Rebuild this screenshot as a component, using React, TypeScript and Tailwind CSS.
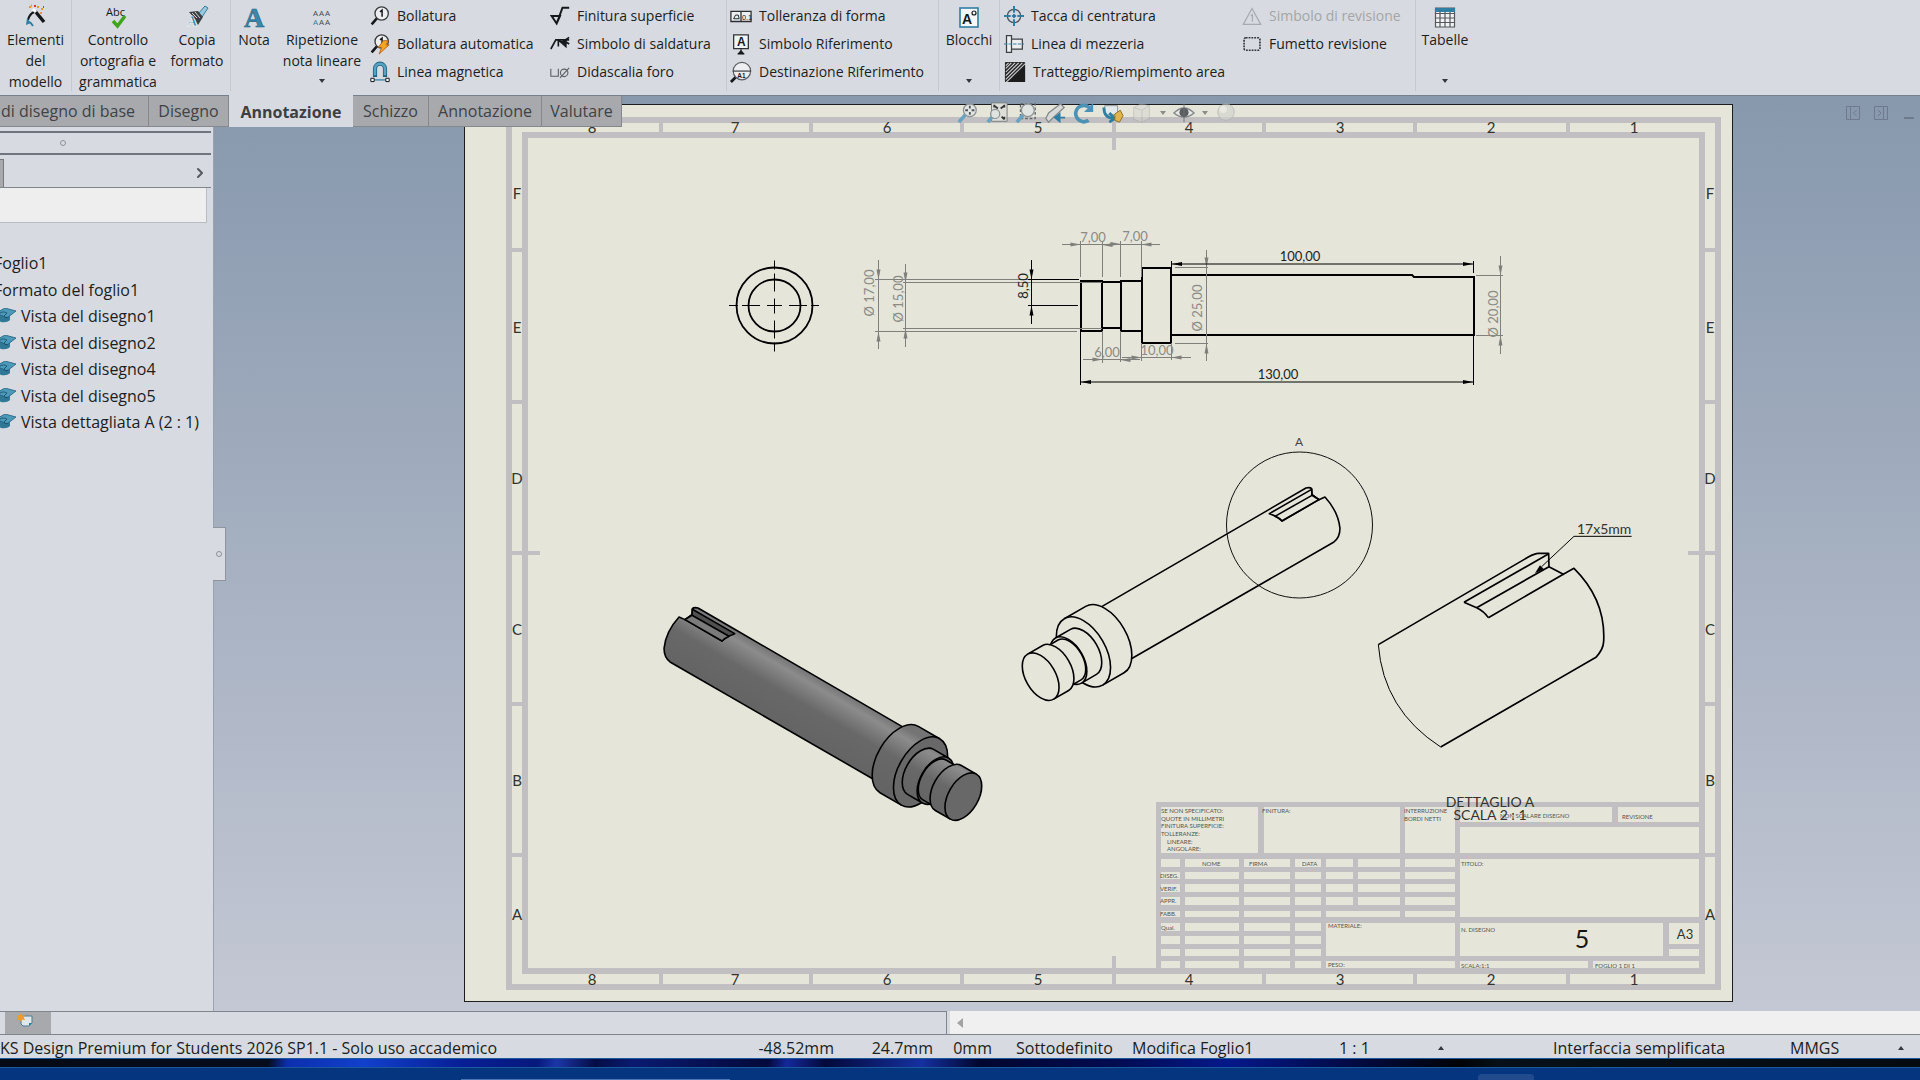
import type { ReactNode } from 'react';
import { ChevronRight } from 'lucide-react';

const INK = '#15181b';
const BLUE = '#2f7ea3';

/* ---------- ribbon icons ---------- */

function Icon({ children, className = 'size-6' }: { children: ReactNode; className?: string }) {
  return (
    <svg viewBox="0 0 24 24" fill="none" className={`${className} shrink-0 overflow-visible`} aria-hidden="true">
      {children}
    </svg>
  );
}

const ModelItemsIcon = () => (
  <Icon>
    <path d="M4 16a12 12 0 0 1 6-8" stroke={INK} strokeWidth="2" />
    <path d="M3 14l-1 7 5-2z" fill={BLUE} />
    <path d="M6 18l3 4" stroke={BLUE} strokeWidth="2" />
    <path d="M11 7l9 11" stroke={INK} strokeWidth="3.400" />
    <path d="M9 5l3 3" stroke="#fff" strokeWidth="3" />
    <path d="M5 3h2M13 3h2M17 5h2M16 9h2M7 1.500h1" stroke="#e8942f" strokeWidth="2" />
    <path d="M10 2h2M19 3h1" stroke="#cc3d2e" strokeWidth="2" />
  </Icon>
);

const SpellIcon = () => (
  <Icon className="h-6 w-7">
    <text x="0" y="12" fontSize="11" fill={INK} fontFamily="Open Sans">Abc</text>
    <path d="M7 17l4.500 5L19 12" stroke="#3fa51c" strokeWidth="3.400" />
  </Icon>
);

const FormatPainterIcon = () => (
  <Icon>
    <path d="M13 10l7-8 3 2-6 9z" fill="#9cc8de" stroke={BLUE} strokeWidth="1" />
    <path d="M4 8l9-1 5 6-5 8-3-6z" fill="#3c4043" />
    <path d="M7 9l5 5M10 8l5 6" stroke="#cfd3d6" strokeWidth="1" />
    <text x="2" y="22" fontSize="14" fontWeight="700" fill={BLUE} stroke="#fff" strokeWidth="0.5" fontFamily="Liberation Serif">A</text>
  </Icon>
);

const NoteIcon = () => (
  <Icon>
    <text x="2" y="23" fontSize="28" fontWeight="700" fill="#3c88ab" stroke="#23627f" strokeWidth="0.6" fontFamily="Liberation Serif">A</text>
  </Icon>
);

const PatternIcon = () => (
  <Icon>
    <g fontSize="8" fontFamily="Open Sans" fill="#44484c">
      <text x="3" y="12">A</text>
      <text x="9" y="12">A</text>
      <text x="15" y="12">A</text>
      <text x="3" y="21" fill={BLUE}>A</text>
      <text x="9" y="21">A</text>
      <text x="15" y="21">A</text>
    </g>
  </Icon>
);

const BalloonIcon = () => (
  <Icon className="size-5">
    <path d="M2 22l7-8" stroke={INK} strokeWidth="3" />
    <circle cx="14" cy="9" r="8" fill="#eceef0" stroke="#3a3d40" strokeWidth="1.600" />
    <path d="M12 7l2.500-2V13" stroke={INK} strokeWidth="1.800" />
  </Icon>
);

const AutoBalloonIcon = () => (
  <Icon className="size-5">
    <path d="M2 22l7-8" stroke={INK} strokeWidth="3" />
    <circle cx="14" cy="9" r="8" fill="#eceef0" stroke="#3a3d40" strokeWidth="1.600" />
    <path d="M12 7l2.500-2V13" stroke={INK} strokeWidth="1.800" />
    <path d="M16 8l6 0-3 5h4L11 24l3-8h-4z" fill="#f5a623" stroke="#b65a12" strokeWidth="1" />
  </Icon>
);

const MagnetIcon = () => (
  <Icon className="size-5">
    <path d="M6 18V8a6 6 0 0 1 12 0v10" stroke="#23627f" strokeWidth="5" />
    <path d="M6 16V8a6 6 0 0 1 12 0v8" stroke="#55a4c6" strokeWidth="3" />
    <path d="M4 21.500h16" stroke={BLUE} strokeWidth="1.500" />
    <path d="M1 19.500h4v4H1zM19 19.500h4v4h-4z" fill="#fff" stroke={INK} strokeWidth="1.200" />
  </Icon>
);

const SurfaceFinishIcon = () => (
  <Icon className="size-5">
    <path d="M2 12h10l-4 9zM8 21L15 2h8" stroke={INK} strokeWidth="2.400" />
  </Icon>
);

const WeldIcon = () => (
  <Icon className="size-5">
    <path d="M1 18l6-11h16M23 4l-6 4 6 4M10 8v7M11 8l8 7V8" stroke={INK} strokeWidth="2" />
    <path d="M12 8h7v6z" fill={INK} />
  </Icon>
);

const HoleCalloutIcon = () => (
  <Icon className="size-5">
    <path d="M1 8v9h9V8" stroke="#5a5e62" strokeWidth="1.300" />
    <circle cx="17" cy="13" r="4.500" stroke="#5a5e62" strokeWidth="1.300" />
    <path d="M12 19L23 7" stroke="#5a5e62" strokeWidth="1.300" />
  </Icon>
);

const GeoToleranceIcon = () => (
  <Icon className="size-[22px]">
    <path d="M1 7h22v11H1zM12 7v11" stroke="#2c2f32" strokeWidth="1.400" fill="#eceef0" />
    <path d="M4 15l2-4h3l1 4z" stroke={INK} strokeWidth="1" />
    <text x="13" y="16" fontSize="8" fill={INK} fontFamily="Liberation Sans">0.1</text>
  </Icon>
);

const DatumIcon = () => (
  <Icon className="size-[22px]">
    <path d="M4 2h16v15H4z" fill="#f3f4f5" stroke="#303336" strokeWidth="1.400" />
    <text x="7.500" y="14" fontSize="13" fontWeight="700" fill={INK} fontFamily="Liberation Sans">A</text>
    <path d="M12 17v3M8.500 23l3.500-4 3.500 4z" fill={INK} stroke={INK} />
  </Icon>
);

const DatumTargetIcon = () => (
  <Icon className="size-[22px]">
    <path d="M1 23l6-6" stroke={INK} strokeWidth="3" />
    <circle cx="13" cy="11" r="9.500" fill="#eceef0" stroke="#5a5e62" strokeWidth="1.300" />
    <path d="M3 11h20" stroke="#3a3d40" strokeWidth="1.300" />
    <text x="8" y="18" fontSize="7" fontWeight="700" fill={INK} fontFamily="Liberation Sans">A1</text>
  </Icon>
);

const BlocksIcon = () => (
  <Icon>
    <rect x="3" y="4" width="18" height="19" fill="#f5f6f7" stroke={BLUE} strokeWidth="1.600" />
    <text x="5" y="20" fontSize="14" fontWeight="700" fill={INK} fontFamily="Liberation Sans">A</text>
    <circle cx="17" cy="9" r="2" stroke={INK} strokeWidth="1.200" />
  </Icon>
);

const CenterMarkIcon = () => (
  <Icon className="size-5">
    <circle cx="12" cy="12" r="8" stroke="#4b4f54" strokeWidth="1.500" />
    <path d="M12 0v8M12 16v8M0 12h8M16 12h8M9.500 12h5M12 9.500v5" stroke={BLUE} strokeWidth="2.400" />
  </Icon>
);

const CenterlineIcon = () => (
  <Icon className="size-5">
    <path d="M3 2h6v20H3zM9 6h13v12H9" stroke="#3c4044" strokeWidth="1.500" fill="#eceef0" />
    <path d="M0 12h24" stroke={BLUE} strokeWidth="1.200" strokeDasharray="4 1.500" />
  </Icon>
);

const HatchIcon = () => (
  <Icon className="size-[22px]">
    <rect x="1" y="1" width="22" height="22" rx="1" fill="#2a2a2b" />
    <path d="M2 20L20 2M2 16L16 2M2 12L12 2M2 8l6-6M2 23.500L23 3M2 5l3-3" stroke="#d8dadc" strokeWidth="1.100" />
    <path d="M23 5v18H5z" fill="#1c1c1d" />
  </Icon>
);

const RevisionSymbolIcon = () => (
  <Icon className="size-5">
    <path d="M12 3l10.500 19h-21z" stroke="#a8abaf" strokeWidth="1.500" />
    <path d="M10.500 12l2-1.500V19" stroke="#a8abaf" strokeWidth="1.500" />
  </Icon>
);

const RevisionCloudIcon = () => (
  <Icon className="size-5">
    <rect x="2.500" y="4.500" width="19" height="15" rx="2" stroke="#33373b" strokeWidth="2" strokeDasharray="2.200 1.200" />
  </Icon>
);

const TablesIcon = () => (
  <Icon>
    <path d="M2.500 4h19v19h-19zM2.500 9.500h19M2.500 14h19M2.500 18.500h19M7 7v16M12 7v16M17 7v16" stroke="#54585c" strokeWidth="1.200" fill="#f1f2f3" />
    <path d="M2 4h20v4H2z" fill="#2f7ea3" />
  </Icon>
);

/* ---------- ribbon ---------- */

function Caret({ up = false }: { up?: boolean }) {
  return (
    <svg viewBox="0 0 6 4" className="h-1 w-1.5" aria-hidden="true">
      <path d={up ? 'M0 4h6L3 0z' : 'M0 0h6L3 4z'} fill="#33373b" />
    </svg>
  );
}

function LargeCommand({ icon, lines, caret, className }: { icon: ReactNode; lines: string[]; caret?: boolean; className: string }) {
  return (
    <button type="button" className={`flex shrink-0 flex-col items-center pt-1 ${className}`}>
      {icon}
      <span className="mt-px whitespace-nowrap text-center leading-[21px]">
        {lines.map((line) => (
          <span key={line} className="block">{line}</span>
        ))}
      </span>
      {caret && <span className="mt-auto pb-3"><Caret /></span>}
    </button>
  );
}

function SmallCommands({ items, className }: { items: { icon: ReactNode; label: string; disabled?: boolean }[]; className: string }) {
  return (
    <div className={`flex shrink-0 flex-col pt-0.5 ${className}`}>
      {items.map((item) => (
        <button
          key={item.label}
          type="button"
          disabled={item.disabled}
          className="flex h-7 items-center gap-[7px] whitespace-nowrap disabled:text-[#a3a6aa]"
        >
          {item.icon}
          {item.label}
        </button>
      ))}
    </div>
  );
}

const Separator = () => <div className="mb-1 w-px shrink-0 bg-[#c5c9ce]" />;

function Ribbon() {
  return (
    <header className="flex h-24 overflow-hidden border-b border-[#76808f] bg-[#d7dae0] text-sm text-[#1b1e22]">
      <LargeCommand icon={<ModelItemsIcon />} lines={['Elementi', 'del', 'modello']} className="w-[71px]" />
      <Separator />
      <LargeCommand icon={<SpellIcon />} lines={['Controllo', 'ortografia e', 'grammatica']} className="w-[92px]" />
      <LargeCommand icon={<FormatPainterIcon />} lines={['Copia', 'formato']} className="w-[66px]" />
      <Separator />
      <LargeCommand icon={<NoteIcon />} lines={['Nota']} className="w-[46px]" />
      <LargeCommand icon={<PatternIcon />} lines={['Ripetizione', 'nota lineare']} caret className="w-[90px]" />
      <SmallCommands
        className="w-[180px] pl-[3px]"
        items={[
          { icon: <BalloonIcon />, label: 'Bollatura' },
          { icon: <AutoBalloonIcon />, label: 'Bollatura automatica' },
          { icon: <MagnetIcon />, label: 'Linea magnetica' },
        ]}
      />
      <SmallCommands
        className="w-[179px] pl-[3px]"
        items={[
          { icon: <SurfaceFinishIcon />, label: 'Finitura superficie' },
          { icon: <WeldIcon />, label: 'Simbolo di saldatura' },
          { icon: <HoleCalloutIcon />, label: 'Didascalia foro' },
        ]}
      />
      <Separator />
      <SmallCommands
        className="w-[211px] pl-[3px]"
        items={[
          { icon: <GeoToleranceIcon />, label: 'Tolleranza di forma' },
          { icon: <DatumIcon />, label: 'Simbolo Riferimento' },
          { icon: <DatumTargetIcon />, label: 'Destinazione Riferimento' },
        ]}
      />
      <Separator />
      <LargeCommand icon={<BlocksIcon />} lines={['Blocchi']} caret className="w-[60px]" />
      <Separator />
      <SmallCommands
        className="w-[239px] pl-1"
        items={[
          { icon: <CenterMarkIcon />, label: 'Tacca di centratura' },
          { icon: <CenterlineIcon />, label: 'Linea di mezzeria' },
          { icon: <HatchIcon />, label: 'Tratteggio/Riempimento area' },
        ]}
      />
      <SmallCommands
        className="w-[176px] pl-[3px]"
        items={[
          { icon: <RevisionSymbolIcon />, label: 'Simbolo di revisione', disabled: true },
          { icon: <RevisionCloudIcon />, label: 'Fumetto revisione' },
        ]}
      />
      <Separator />
      <LargeCommand icon={<TablesIcon />} lines={['Tabelle']} caret className="w-[58px]" />
    </header>
  );
}

const TABS = [
  { id: 'base', label: 'di disegno di base', width: 'w-[149px] justify-end pr-[13px]' },
  { id: 'disegno', label: 'Disegno', width: 'w-20 justify-center' },
  { id: 'annotazione', label: 'Annotazione', width: 'w-[124px] justify-center', active: true },
  { id: 'schizzo', label: 'Schizzo', width: 'w-[76px] justify-center' },
  { id: 'annotazione-2', label: 'Annotazione', width: 'w-[113px] justify-center' },
  { id: 'valutare', label: 'Valutare', width: 'w-20 justify-center' },
];

function CommandTabs() {
  return (
    <nav className="absolute left-0 top-0 z-20 flex h-[31px] text-base" role="tablist">
      {TABS.map((tab) => (
        <button
          key={tab.id}
          type="button"
          role="tab"
          aria-selected={!!tab.active}
          className={`flex items-center overflow-hidden whitespace-nowrap ${tab.width} ${
            tab.active
              ? '-mt-px bg-[#d7dae0] pt-px font-bold text-[#3c3f43]'
              : 'border-b border-r border-[#85888c] bg-[#a7a9ac] text-[#3f4246]'
          }`}
        >
          {tab.label}
        </button>
      ))}
    </nav>
  );
}

/* ---------- feature tree ---------- */

function HatIcon() {
  return (
    <svg viewBox="0 0 20 16" className="h-4 w-5 shrink-0" aria-hidden="true">
      <path d="M2 7v5c3 3 9 3 12 0V6z" fill="#2f7896" />
      <path d="M0 5L9 0l11 3-9 7z" fill="#4b9aba" stroke="#23607c" strokeWidth="0.8" />
      <path d="M3 6c3-3 6-2 8-1l-3 3c1 2 3 2 4 1" stroke="#1d4f66" strokeWidth="0.900" fill="none" />
    </svg>
  );
}

const SHEETS = ['Foglio1', 'Formato del foglio1'];
const VIEWS = ['Vista del disegno1', 'Vista del disegno2', 'Vista del disegno4', 'Vista del disegno5', 'Vista dettagliata A (2 : 1)'];

function FeaturePanel() {
  return (
    <aside className="relative z-10 flex w-[214px] shrink-0 flex-col border-r border-[#9aa3b0] bg-[#d7dae0] pt-[35px] text-base text-[#1b1e22]">
      <div className="mr-0.5 flex h-6 items-center justify-center border-y-2 border-[#6f757d] pr-[86px]">
        <span className="size-1.5 rounded-full border border-[#8f9398]" />
      </div>
      <div className="mr-0.5 flex h-[33px] items-center justify-end border-b border-[#7f858c] pr-[3px]">
        <span className="mr-auto mt-1 h-7 w-1 border-r border-t border-[#777b80] bg-[#a7a9ac]" />
        <button type="button" aria-label="Espandi" className="pt-1">
          <ChevronRight className="size-4 text-[#55595e]" strokeWidth={3} />
        </button>
      </div>
      <input aria-label="Filtro" className="mr-1.5 h-[35px] border-b border-r border-[#b9bcc0] bg-[#eeeeee] px-2" />
      <ul className="mt-[27px] flex h-[185px] flex-col justify-between overflow-hidden">
        {SHEETS.map((name) => (
          <li key={name} className="-ml-1.5 h-[26px] leading-[26px]">
            <button type="button" className="whitespace-nowrap">{name}</button>
          </li>
        ))}
        {VIEWS.map((name) => (
          <li key={name} className="-ml-1 h-[26px]">
            <button type="button" className="flex h-full items-center gap-[5px] whitespace-nowrap">
              <HatIcon />
              {name}
            </button>
          </li>
        ))}
      </ul>
      <button
        type="button"
        aria-label="Comprimi pannello"
        className="absolute -right-[13px] top-[431px] flex h-[54px] w-[13px] items-center justify-center border-y border-r border-[#8f959d] bg-[#d7dae0]"
      >
        <span className="size-1.5 rounded-full border border-[#8f9398]" />
      </button>
    </aside>
  );
}

/* ---------- sheet drawing ---------- */

const PAPER = '#e5e5da';
const FRAME = '#c1bfc1';
const DIM = '#7f7f7b';
const FONT = 'Lato, "Open Sans", sans-serif';

// Top and bottom zones share the same columns, left and right the same rows
const COLS: [string, number][] = [['8', 592], ['7', 735], ['6', 887], ['5', 1038], ['4', 1189], ['3', 1340], ['2', 1491], ['1', 1634]];
const COL_TICKS = [661, 811, 962, 1264, 1415, 1568];
const ROWS: [string, number][] = [['F', 193], ['E', 327], ['D', 478], ['C', 629], ['B', 780], ['A', 914]];
const ROW_TICKS = [250, 402, 704, 855];

function SheetFrame() {
  return (
    <g>
      <g fill="none" stroke={FRAME} strokeWidth="6">
        <rect x="509" y="120" width="1209" height="867" />
        <rect x="525" y="135" width="1177" height="836" />
      </g>
      <g stroke={FRAME} strokeWidth="4">
        {COL_TICKS.map((x) => (
          <path key={x} d={`M${x} 122V133M${x} 973V985`} />
        ))}
        {ROW_TICKS.map((y) => (
          <path key={y} d={`M511 ${y}H523M1704 ${y}H1716`} />
        ))}
        <path d="M1114 122V150M1114 956V985M511 553H540M1688 553H1716" />
      </g>
      <g fontSize="15" fill="#33342f" textAnchor="middle">
        {COLS.map(([label, x]) => (
          <g key={label}>
            <text x={x} y="133">{label}</text>
            <text x={x} y="985">{label}</text>
          </g>
        ))}
        {ROWS.map(([label, y]) => (
          <g key={label}>
            <text x="517" y={y + 6}>{label}</text>
            <text x="1710" y={y + 6}>{label}</text>
          </g>
        ))}
      </g>
    </g>
  );
}

// [x1, x2] spans of the signature grid
const GRID_COLS = [[1161, 1180], [1185, 1239], [1244, 1290], [1295, 1321], [1326, 1353], [1358, 1400], [1405, 1455]];
const GRID_ROWS = [[859, 867], [872, 879], [884, 892], [897, 905], [911, 917], [923, 931], [936, 944], [949, 956], [961, 968]];

// [x1, y1, x2, y2]
const CELLS = [
  [1161, 807, 1258, 853], [1264, 807, 1400, 853], [1405, 807, 1455, 853],
  [1460, 807, 1612, 822], [1618, 807, 1699, 822], [1460, 827, 1699, 853],
  [1460, 859, 1699, 917], [1460, 923, 1663, 956], [1669, 923, 1699, 944], [1669, 949, 1699, 956],
  [1326, 911, 1400, 917], [1326, 923, 1455, 956], [1326, 961, 1455, 968],
  [1460, 961, 1588, 968], [1593, 961, 1699, 968],
];

const BLOCK_TEXT: [string, number, number][] = [
  ['SE NON SPECIFICATO:', 1161, 813], ['QUOTE IN MILLIMETRI', 1161, 821], ['FINITURA SUPERFICIE:', 1161, 828],
  ['TOLLERANZE:', 1161, 836], ['LINEARE:', 1167, 844], ['ANGOLARE:', 1167, 851],
  ['FINITURA:', 1262, 813], ['INTERRUZIONE', 1404, 813], ['BORDI NETTI', 1404, 821],
  ['NON SCALARE DISEGNO', 1500, 818], ['REVISIONE', 1622, 819],
  ['NOME', 1202, 866], ['FIRMA', 1249, 866], ['DATA', 1302, 866], ['TITOLO:', 1461, 866],
  ['DISEG.', 1160, 878], ['VERIF.', 1160, 891], ['APPR.', 1160, 903], ['FABB.', 1160, 916], ['Qual.', 1161, 930],
  ['MATERIALE:', 1328, 928], ['N. DISEGNO', 1461, 932], ['PESO:', 1328, 967],
  ['SCALA:1:1', 1461, 968], ['FOGLIO 1 DI 1', 1595, 968],
];

function TitleBlock() {
  return (
    <g>
      <rect x="1156" y="802" width="548" height="170" fill={FRAME} />
      <g fill={PAPER}>
        {GRID_ROWS.map(([y1, y2], row) =>
          GRID_COLS.slice(0, row < 4 ? 7 : 4).map(([x1, x2]) => (
            <rect key={`${x1}-${y1}`} x={x1} y={y1} width={x2 - x1} height={y2 - y1} />
          ))
        )}
        <rect x="1405" y="911" width="50" height="6" />
        {CELLS.map(([x1, y1, x2, y2]) => (
          <rect key={`${x1}-${y1}`} x={x1} y={y1} width={x2 - x1} height={y2 - y1} />
        ))}
      </g>
      <g fontSize="6" fill="#55564f">
        {BLOCK_TEXT.map(([label, x, y]) => (
          <text key={label} x={x} y={y}>{label}</text>
        ))}
      </g>
      <g fill="#15160f" textAnchor="middle">
        <text x="1582" y="948" fontSize="25">5</text>
        <text x="1685" y="939" fontSize="13" fill="#33342f">A3</text>
      </g>
    </g>
  );
}

type Dir = 'l' | 'r' | 'u' | 'd';

// Arrow head whose tip is at x, y
function Arrow({ x, y, dir, size = 10 }: { x: number; y: number; dir: Dir; size?: number }) {
  const angle = { r: 0, d: 90, l: 180, u: 270 }[dir];
  return <path d={`M0 0L${-size} -2V2Z`} transform={`translate(${x} ${y}) rotate(${angle})`} stroke="none" />;
}

function FrontView() {
  return (
    <g fill="none" stroke="#000" strokeWidth="1.800">
      <circle cx="774.500" cy="305.500" r="38" />
      <circle cx="774.500" cy="305.500" r="26" />
      <path
        d="M729 305.500h9M742 305.500h18M767 305.500h15M789 305.500h18M811 305.500h8M774.500 260.500v9M774.500 273.500v18M774.500 298.500v15M774.500 320.500v18M774.500 342.500v9"
        strokeWidth="1"
      />
    </g>
  );
}

function SideView() {
  return (
    <g>
      <g fill="none" stroke="#000" strokeWidth="2">
        <rect x="1081" y="281" width="21" height="50" />
        <path d="M1102 282H1120M1102 328H1120M1141 281H1121V331H1141" />
        <rect x="1142" y="268" width="29" height="75" />
        <path d="M1171 275H1412l2 2H1474V335H1171" />
      </g>

      <g stroke={DIM} fill={DIM} strokeWidth="1">
        <path d="M878.500 260V349M875 279.500H1079M875 331.500H1077" />
        <Arrow x={878.500} y={279.500} dir="d" />
        <Arrow x={878.500} y={331.500} dir="u" />
        <path d="M905.500 264V347M903 282.500H1102M903 328.500H1102" />
        <Arrow x={905.500} y={282.500} dir="d" />
        <Arrow x={905.500} y={328.500} dir="u" />
        <path d="M1062 244.500H1122M1102 244.500H1160M1080.500 241V277M1102.500 241V277M1120.500 241V277M1141.500 241V277" />
        <Arrow x={1080.500} y={244.500} dir="r" />
        <Arrow x={1102.500} y={245} dir="l" />
        <Arrow x={1120.500} y={244} dir="r" />
        <Arrow x={1141.500} y={244.500} dir="l" />
        <path d="M1083 359.500H1140M1122 357.500H1191M1102.500 331V363M1120.500 331V362M1141.500 343V361M1171.500 343V360" />
        <Arrow x={1102.500} y={359.500} dir="r" />
        <Arrow x={1120.500} y={360} dir="l" />
        <Arrow x={1141.500} y={357.500} dir="r" />
        <Arrow x={1171.500} y={357.500} dir="l" />
        <path d="M1206.500 250V361M1175 267.500H1208M1175 343.500H1208" />
        <Arrow x={1206.500} y={267.500} dir="d" />
        <Arrow x={1206.500} y={343.500} dir="u" />
        <path d="M1500.500 256V354M1476 275.500H1503M1476 335.500H1503" />
        <Arrow x={1500.500} y={275.500} dir="d" />
        <Arrow x={1500.500} y={335.500} dir="u" />
      </g>

      <g stroke="#000" fill="#000" strokeWidth="1">
        <path d="M1031.500 260V324M1028 279.500H1079M1028 305.500H1078" />
        <Arrow x={1031.500} y={279.500} dir="d" />
        <Arrow x={1031.500} y={305.500} dir="u" />
        <path d="M1172 264H1474M1171.500 261V273M1473.500 261V273" />
        <Arrow x={1172} y={264} dir="l" />
        <Arrow x={1473} y={264} dir="r" />
        <path d="M1081 382H1474M1080.500 331V385M1473.500 336V385" />
        <Arrow x={1081} y={382} dir="l" />
        <Arrow x={1473} y={382} dir="r" />
      </g>

      <g fontSize="13" textAnchor="middle" fill="#8b8b86">
        <text x="1093" y="242">7,00</text>
        <text x="1135" y="241">7,00</text>
        <text x="1107" y="357">6,00</text>
        <text x="1157" y="355">10,00</text>
        <text transform="translate(874 293) rotate(-90)">Ø 17,00</text>
        <text transform="translate(903 299) rotate(-90)">Ø 15,00</text>
        <text transform="translate(1202 308) rotate(-90)">Ø 25,00</text>
        <text transform="translate(1498 314) rotate(-90)">Ø 20,00</text>
      </g>
      <g fontSize="13" textAnchor="middle" fill="#22231e">
        <text transform="translate(1028 286) rotate(-90)">8,50</text>
        <text x="1300" y="261">100,00</text>
        <text x="1278" y="379">130,00</text>
      </g>
    </g>
  );
}

// Coaxial isometric cylinders. Station is the distance in mm from the small end face.
const at = (mm: number) => [122 + mm * 6.42, 770 - mm * 3.71];

function Cylinder({ from, to, radius, fill, faceFill }: { from: number; to: number; radius: number; fill: string; faceFill: string }) {
  const [bx, by] = at(from);
  const [fx, fy] = at(to);
  const minor = radius * 0.577;
  const dx = radius * 0.5;
  const dy = radius * 0.866;
  return (
    <>
      <path
        d={`M${fx - dx} ${fy - dy}L${bx - dx} ${by - dy}A${minor} ${radius} -30 0 1 ${bx + dx} ${by + dy}L${fx + dx} ${fy + dy}`}
        fill={fill}
      />
      <ellipse cx={fx} cy={fy} rx={minor} ry={radius} transform={`rotate(-30 ${fx} ${fy})`} fill={faceFill} />
    </>
  );
}

function Shaft({ shaded = false }: { shaded?: boolean }) {
  const fill = shaded ? 'url(#steel)' : PAPER;
  const face = shaded ? '#686868' : PAPER;
  return (
    <g fill="none" stroke="#000" strokeWidth="4.800" strokeLinejoin="round">
      <path
        d="M300 563L808 268L918 204Q930 201 935 206L936 224L957 239L975 231Q1015 275 1020 325Q1020 352 1002 366L393 717"
        fill={fill}
      />
      <path d="M808 281L935 208L936 224L957 239L846 303Q838 292 808 281Z" fill={shaded ? '#505050' : 'none'} />
      <path d="M825 289L936 226L957 239L846 303Q838 295 825 289Z" fill={shaded ? '#7b7b7b' : 'none'} />
      <Cylinder from={30} to={20} radius={115} fill={fill} faceFill={face} />
      <Cylinder from={20} to={13} radius={78} fill={fill} faceFill={face} />
      <Cylinder from={13.500} to={7} radius={69} fill={fill} faceFill={face} />
      <Cylinder from={7} to={0} radius={78} fill={fill} faceFill={face} />
    </g>
  );
}

function IsometricViews() {
  return (
    <g>
      <g transform="translate(1004 380) scale(-0.3333 0.3333) translate(0 480)">
        <Shaft shaded />
      </g>
      <g transform="translate(1000 420) scale(0.3333)">
        <Shaft />
      </g>
      <circle cx="1299.500" cy="525" r="73" fill="none" stroke="#111" strokeWidth="1" />
      <text x="1299" y="446" fontSize="12" textAnchor="middle" fill="#44453f">A</text>
    </g>
  );
}

function DetailView() {
  return (
    <g>
      <g transform="translate(1350 500) scale(0.3333)" fill="none" stroke="#000" strokeWidth="5" strokeLinejoin="round">
        <path d="M85 434Q100 630 272 741" strokeWidth="3" />
        <path d="M272 741L738 472Q760 448 761 425Q768 300 672 205L640 223L597 200L596 160H565Q555 160 535 171L85 434" />
        <path d="M342 307L595 162M380 323L597 200M415 353L640 223M342 307L380 323Q403 334 415 353" />
        <path d="M845 109H672L575 200" strokeWidth="3" />
        <path d="M555 220L570 196L582 208Z" fill="#000" stroke="none" />
      </g>
      <g fill="#33342f">
        <text x="1577" y="534" fontSize="14">17x5mm</text>
        <text x="1490" y="807" fontSize="14" textAnchor="middle">DETTAGLIO A</text>
        <text x="1490" y="820" fontSize="14" textAnchor="middle">SCALA 2 : 1</text>
      </g>
    </g>
  );
}

function Sheet() {
  return (
    <svg viewBox="464 104 1269 898" className="h-auto min-w-0 flex-1" fontFamily={FONT}>
      <defs>
        <linearGradient id="steel" gradientUnits="userSpaceOnUse" x1="554" y1="414" x2="646" y2="573">
          <stop offset="0" stopColor="#747474" />
          <stop offset="0.15" stopColor="#8c8c8c" />
          <stop offset="0.5" stopColor="#686868" />
          <stop offset="1" stopColor="#646464" />
        </linearGradient>
      </defs>
      <rect x="464.500" y="104.500" width="1268" height="897" fill={PAPER} stroke="#1a1c1e" />
      <SheetFrame />
      <TitleBlock />
      <FrontView />
      <SideView />
      <IsometricViews />
      <DetailView />
    </svg>
  );
}

/* ---------- heads-up view toolbar ---------- */

const Lens = ({ cx = 14, cy = 9, r = 7 }: { cx?: number; cy?: number; r?: number }) => (
  <>
    <path d={`M2 22L${cx - r + 2} ${cy + r - 2}`} stroke="#6aa3bf" strokeWidth="4" />
    <circle cx={cx} cy={cy} r={r} fill="#dfe5e4" fillOpacity="0.8" stroke="#8c9294" strokeWidth="1.300" />
  </>
);

const VIEW_TOOLS: { id: string; title: string; icon: ReactNode; caret?: boolean }[] = [
  {
    id: 'fit',
    title: 'Zoom adatta',
    icon: <><Lens /><path d="M14 4v3M14 11v3M9 9h3M16 9h3" stroke="#50565a" strokeWidth="2" /></>,
  },
  {
    id: 'sheet',
    title: 'Adatta foglio',
    icon: <><path d="M6 1h17v20H6z" fill="#dedfd8" stroke="#74787a" /><Lens cx={10} cy={13} r={5} /><path d="M9 4l4 3M20 4l-4 3M20 19l-3-3M9 3v3M20 3v3M20 19v-3" stroke="#33373a" strokeWidth="2" /></>,
  },
  {
    id: 'area',
    title: 'Zoom area',
    icon: <><path d="M6 2h16v16H6z" stroke="#63676a" strokeDasharray="3 2" strokeWidth="1.500" /><Lens /></>,
  },
  {
    id: 'previous',
    title: 'Vista precedente',
    icon: <><path d="M2 18l3-6L18 2l4 4L9 18l-4 4z" fill="#d7dad6" stroke="#85898b" strokeWidth="1.400" /><path d="M23 17h-8M17 13l-5 4 5 4z" fill={BLUE} stroke={BLUE} strokeWidth="2" /></>,
  },
  {
    id: 'rotate',
    title: 'Ruota vista',
    icon: <><path d="M17 20A9 9 0 1 1 18 6" stroke="#4c92b4" strokeWidth="4" /><path d="M22 1v10H12z" fill="#4c92b4" /></>,
  },
  {
    id: 'update',
    title: 'Vista 3D',
    icon: <><path d="M3 4h14v10H3z" fill="#e3e8ea" stroke="#8c9294" /><path d="M2 6c0 8 4 12 12 12M8 12l6 6-6 4" stroke={BLUE} strokeWidth="3" /><path d="M14 13l6-4 3 6-4 7-5-2z" fill="#e0b64b" stroke="#8d6c1f" /></>,
  },
  {
    id: 'style',
    title: 'Stile di visualizzazione',
    caret: true,
    icon: <g opacity="0.5"><path d="M3 6l8-4 9 2v14l-8 4-9-3z" fill="#d6d7d1" stroke="#a7a9a6" /><path d="M3 6l9 3 8-5M12 9v13" stroke="#a7a9a6" /></g>,
  },
  {
    id: 'hide',
    title: 'Nascondi/Mostra',
    caret: true,
    icon: <><path d="M1 12Q12 1 23 12Q12 21 1 12Z" fill="#e6e7e2" stroke="#85898b" strokeWidth="1.500" /><circle cx="12" cy="11.500" r="5" fill="#5a5e61" /><path d="M12 2v20" stroke="#6c7073" /></>,
  },
  {
    id: 'appearance',
    title: 'Aspetto',
    icon: <g opacity="0.7"><circle cx="12" cy="11" r="9" fill="#d3d4ce" stroke="#adaea9" /><circle cx="9" cy="8" r="4" fill="#ecece6" /></g>,
  },
];

function ViewToolbar() {
  return (
    <div className="absolute left-[743px] top-[7px] flex h-5 items-center gap-[7px]">
      {VIEW_TOOLS.map((tool) => (
        <button key={tool.id} type="button" aria-label={tool.title} className="flex items-center gap-[7px]">
          <Icon className="size-[22px]">{tool.icon}</Icon>
          {tool.caret && <span className="opacity-50"><Caret /></span>}
        </button>
      ))}
    </div>
  );
}

function WindowControls() {
  return (
    <div className="absolute right-0 top-2.5 flex items-center gap-3.5 text-[#6f7b8c]">
      <button type="button" aria-label="Riquadro a sinistra">
        <svg viewBox="0 0 14 14" className="size-3.5" fill="none" stroke="currentColor">
          <path d="M0.500 0.500h13v13H0.500zM4.500 0.500v13M10.500 4l-3 3 3 3" />
        </svg>
      </button>
      <button type="button" aria-label="Riquadro a destra">
        <svg viewBox="0 0 14 14" className="size-3.5" fill="none" stroke="currentColor">
          <path d="M0.500 0.500h13v13H0.500zM9.500 0.500v13M4 4l3 3-3 3" />
        </svg>
      </button>
      <button type="button" aria-label="Riduci a icona" className="pr-1">
        <svg viewBox="0 0 14 14" className="size-3.5" stroke="currentColor">
          <path d="M2 12h10" strokeWidth="2" />
        </svg>
      </button>
    </div>
  );
}

/* ---------- bottom bars ---------- */

function SheetTabs() {
  return (
    <div className="flex h-[23px] bg-[#d7dae0]">
      <div className="flex flex-1 border-r border-t border-[#7f858c] pl-[5px]">
        <button type="button" aria-label="Aggiungi foglio" className="flex w-[46px] items-start justify-center bg-[#a7a9ac] pr-1.5 pt-px">
          <svg viewBox="0 0 16 14" className="h-3.5 w-4">
            <path d="M4 3h11v7l-3 3H6L4 11z" fill="#dfe6ec" stroke="#4c7d97" />
            <path d="M12 13v-3h3" fill={BLUE} />
            <path d="M4 0l1.200 2.500L8 2 6.800 4.500 8 7 5.200 6.800 4 9 2.800 6.800 0 7l1.200-2.500L0 2l2.800.5z" fill="#f39a27" />
          </svg>
        </button>
      </div>
      <div className="ml-[3px] flex w-[970px] items-center bg-[#f0f0f0] pl-[7px]">
        <button type="button" aria-label="Scorri a sinistra">
          <svg viewBox="0 0 6 10" className="h-2.5 w-1.5"><path d="M6 0v10L0 5z" fill="#a3a3a3" /></svg>
        </button>
      </div>
    </div>
  );
}

function StatusBar() {
  return (
    <footer className="flex h-6 items-center whitespace-nowrap border-t border-[#7f858c] bg-[#d7dae0] pt-0.5 text-base text-[#1b1e22]">
      <span className="flex-1">KS Design Premium for Students 2026 SP1.1 - Solo uso accademico</span>
      <span className="w-24 text-right">-48.52mm</span>
      <span className="w-[99px] text-right">24.7mm</span>
      <span className="w-[59px] text-right">0mm</span>
      <span className="w-[140px] pl-6">Sottodefinito</span>
      <span className="w-[207px]">Modifica Foglio1</span>
      <button type="button" className="flex w-[214px] items-center gap-[68px]">
        1 : 1
        <Caret up />
      </button>
      <span className="w-[237px]">Interfaccia semplificata</span>
      <button type="button" className="flex w-[130px] items-center gap-[59px]">
        MMGS
        <Caret up />
      </button>
    </footer>
  );
}

function Desktop() {
  return (
    <>
      <div className="h-2.5 border-y border-[#1b5a9c] bg-[linear-gradient(100deg,#050a14_0%,#060c1c_14%,#0c2fae_15%,#1140cc_19%,#071f96_24%,#06197c_28%,#1c36a8_29%,#050d45_31%,#0a1a70_33%,#04093a_40%,#14289a_41%,#04093a_43%,#1530a0_48%,#02062e_51%,#030b50_58%,#05188a_64%,#020b48_70%,#010306_76%,#071018_78%,#050a10_100%)]" />
      <div className="flex h-3 items-end bg-[#06357f]">
        <div className="ml-[24%] h-px w-[14%] bg-[#4a74b4]" />
        <div className="ml-[39%] h-1.5 w-14 rounded-t bg-[#224b8e]" />
      </div>
    </>
  );
}

export default function App() {
  return (
    <div className="flex min-h-screen flex-col overflow-hidden font-['Open_Sans','Noto_Sans',sans-serif]">
      <Ribbon />
      <main className="relative flex flex-1">
        <CommandTabs />
        <FeaturePanel />
        <section className="relative flex flex-1 items-start bg-linear-to-b from-[#8798ad] to-[#c4c8d4] pb-[9px] pl-[250px] pr-[187px] pt-2">
          <Sheet />
          <ViewToolbar />
          <WindowControls />
        </section>
      </main>
      <SheetTabs />
      <StatusBar />
      <Desktop />
    </div>
  );
}
